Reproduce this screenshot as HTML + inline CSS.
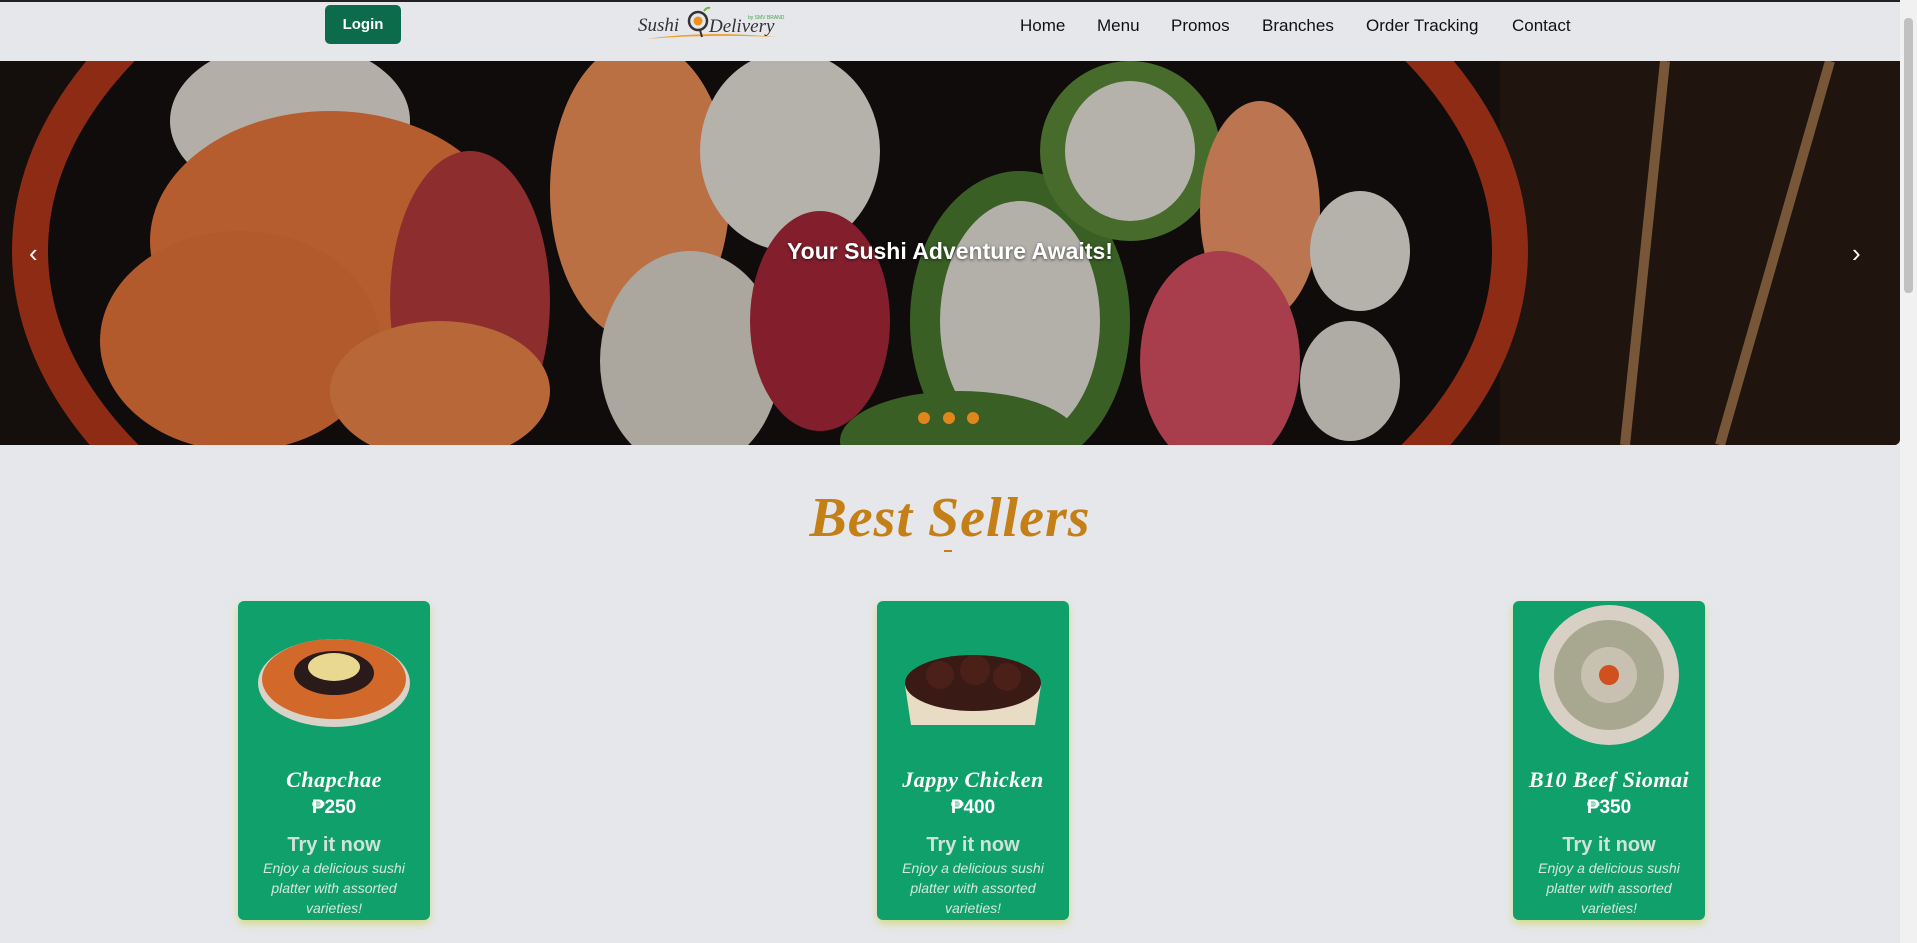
<!DOCTYPE html>
<html><head><meta charset="utf-8"><style>
*{margin:0;padding:0;box-sizing:border-box}
html,body{width:1917px;height:943px;overflow:hidden;background:#e5e7eb;font-family:"Liberation Sans",sans-serif}
.topline{position:absolute;left:0;top:0;width:1900px;height:2px;background:#222}
.login{position:absolute;left:325px;top:5px;width:76px;height:39px;background:#0b6b4a;border-radius:5px;color:#fff;font-size:15px;font-weight:bold;display:flex;align-items:center;justify-content:center}
.logo{position:absolute;left:636px;top:6px}
.nav{position:absolute;top:16px;font-size:17px;color:#111}
.hero{position:absolute;left:0;top:61px;width:1900px;height:384px;overflow:hidden;border-radius:0 0 6px 0}
.title{position:absolute;left:0;width:1900px;top:238px;text-align:center;color:#fff;font-weight:bold;font-size:23px;text-shadow:0 1px 3px rgba(0,0,0,.6)}
.arrow{position:absolute;top:238px;color:#fff;font-size:26px}
.dot{position:absolute;top:412px;width:12px;height:12px;border-radius:50%;background:#e0861a}
.scroll{position:absolute;left:1900px;top:0;width:17px;height:943px;background:#f1f1f1}
.thumb{position:absolute;left:1904px;top:18px;width:9px;height:275px;background:#c1c1c1;border-radius:4px}
h2{position:absolute;left:0;width:1900px;top:486px;text-align:center;font-family:"Liberation Serif",serif;font-style:italic;font-weight:bold;font-size:56px;letter-spacing:1px;color:#c47f17}
.ul{position:absolute;left:944px;top:550px;width:8px;height:2px;background:#c47f17}
.card{position:absolute;top:601px;width:192px;height:319px;background:#10a06c;border-radius:6px;box-shadow:0 4px 8px rgba(200,210,60,.55);text-align:center;color:#fff}
.card .img{position:absolute;left:18px;top:24px;width:156px;height:110px}
.nm{position:absolute;top:166px;width:100%;font-family:"Liberation Serif",serif;font-style:italic;font-weight:bold;font-size:22px;letter-spacing:.5px}
.pr{position:absolute;top:196px;width:100%;font-weight:bold;font-size:19px}
.try{position:absolute;top:233px;width:100%;font-weight:bold;font-size:20px;color:#cfe3da}
.ds{position:absolute;top:257px;left:12px;right:12px;font-style:italic;font-size:14px;line-height:20px;color:#d4e8de}
</style></head><body>
<div class="topline"></div>
<div class="login">Login</div>
<svg class="logo" width="150" height="38" viewBox="0 0 150 38">
<path d="M10 33 Q70 24 140 31 Q70 28 10 33Z" fill="#f0a030"/>
<text x="2" y="25" font-family="Liberation Serif" font-style="italic" font-size="19" fill="#333">Sushi</text>
<circle cx="62" cy="15" r="9" fill="none" stroke="#333" stroke-width="2.5"/>
<circle cx="62" cy="15" r="4.5" fill="#f0901a"/>
<path d="M64 24 L66 31" stroke="#333" stroke-width="2"/>
<path d="M68 5 q3 -4 6 -3" stroke="#6b3" stroke-width="2" fill="none"/>
<text x="73" y="26" font-family="Liberation Serif" font-style="italic" font-size="19" fill="#333">Delivery</text>
<text x="112" y="13" font-size="5" fill="#4a4">by SMV BRAND</text>
</svg>
<div class="nav" style="left:1020px">Home</div>
<div class="nav" style="left:1097px">Menu</div>
<div class="nav" style="left:1171px">Promos</div>
<div class="nav" style="left:1262px">Branches</div>
<div class="nav" style="left:1366px">Order Tracking</div>
<div class="nav" style="left:1512px">Contact</div>

<div class="hero">
<svg width="1900" height="384" viewBox="0 0 1900 384">
<rect width="1900" height="384" fill="#1a1311"/>
<rect x="1500" y="0" width="400" height="384" fill="#2a1a14"/>
<line x1="1665" y1="0" x2="1625" y2="384" stroke="#9a7048" stroke-width="10"/>
<line x1="1830" y1="0" x2="1720" y2="384" stroke="#9a7048" stroke-width="10"/>
<ellipse cx="770" cy="190" rx="740" ry="420" fill="#151010" stroke="#b6381c" stroke-width="36"/>
<ellipse cx="290" cy="60" rx="120" ry="80" fill="#e6e0d8"/>
<ellipse cx="330" cy="180" rx="180" ry="130" fill="#e9783e"/>
<ellipse cx="240" cy="280" rx="140" ry="110" fill="#e47438"/>
<ellipse cx="470" cy="240" rx="80" ry="150" fill="#b53a3a"/>
<ellipse cx="440" cy="330" rx="110" ry="70" fill="#ec8448"/>
<ellipse cx="640" cy="130" rx="90" ry="150" fill="#f09058"/>
<ellipse cx="790" cy="90" rx="90" ry="100" fill="#e8e4dc"/>
<ellipse cx="690" cy="300" rx="90" ry="110" fill="#dcd6cc"/>
<ellipse cx="820" cy="260" rx="70" ry="110" fill="#a8283a"/>
<ellipse cx="1020" cy="260" rx="110" ry="150" fill="#4a7a30"/>
<ellipse cx="1020" cy="260" rx="80" ry="120" fill="#e6e2da"/>
<ellipse cx="1130" cy="90" rx="90" ry="90" fill="#5a8a38"/>
<ellipse cx="1130" cy="90" rx="65" ry="70" fill="#e8e4dc"/>
<ellipse cx="1260" cy="150" rx="60" ry="110" fill="#f09868"/>
<ellipse cx="1220" cy="300" rx="80" ry="110" fill="#d85060"/>
<ellipse cx="1360" cy="190" rx="50" ry="60" fill="#e8e4dc"/>
<ellipse cx="1350" cy="320" rx="50" ry="60" fill="#e0dcd4"/>
<ellipse cx="960" cy="380" rx="120" ry="50" fill="#4a7a30"/>
<rect width="1900" height="384" fill="rgba(0,0,0,0.22)"/>
</svg>
</div>
<div class="title">Your Sushi Adventure Awaits!</div>
<div class="arrow" style="left:29px">&#8249;</div>
<div class="arrow" style="left:1852px">&#8250;</div>
<div class="dot" style="left:918px"></div>
<div class="dot" style="left:943px"></div>
<div class="dot" style="left:967px"></div>
<div class="scroll"></div><div class="thumb"></div>

<h2>Best Sellers</h2>
<div class="ul"></div>

<div class="card" style="left:238px">
<svg class="img" viewBox="0 0 156 110"><ellipse cx="78" cy="58" rx="76" ry="44" fill="#d8d2c8"/><ellipse cx="78" cy="54" rx="72" ry="40" fill="#d2682a"/><ellipse cx="78" cy="48" rx="40" ry="22" fill="#2a1a1a"/><ellipse cx="78" cy="42" rx="26" ry="14" fill="#e8d890"/></svg>
<div class="nm">Chapchae</div><div class="pr">₱250</div><div class="try">Try it now</div>
<div class="ds">Enjoy a delicious sushi platter with assorted varieties!</div></div>

<div class="card" style="left:877px">
<svg class="img" viewBox="0 0 156 110"><path d="M10 60 L146 60 L140 100 L16 100Z" fill="#e8dcc4"/><ellipse cx="78" cy="58" rx="68" ry="28" fill="#3a1a14"/><circle cx="45" cy="50" r="14" fill="#4a2018"/><circle cx="80" cy="45" r="15" fill="#4a2018"/><circle cx="112" cy="52" r="14" fill="#4a2018"/></svg>
<div class="nm">Jappy Chicken</div><div class="pr">₱400</div><div class="try">Try it now</div>
<div class="ds">Enjoy a delicious sushi platter with assorted varieties!</div></div>

<div class="card" style="left:1513px">
<svg class="img" viewBox="0 0 156 110" style="top:4px;height:150px" preserveAspectRatio="xMidYMin meet"><circle cx="78" cy="70" r="70" fill="#d8d0c4"/><circle cx="78" cy="70" r="55" fill="#a8a890"/><circle cx="78" cy="70" r="28" fill="#c8c0b0"/><circle cx="78" cy="70" r="10" fill="#d05020"/></svg>
<div class="nm">B10 Beef Siomai</div><div class="pr">₱350</div><div class="try">Try it now</div>
<div class="ds">Enjoy a delicious sushi platter with assorted varieties!</div></div>
</body></html>
